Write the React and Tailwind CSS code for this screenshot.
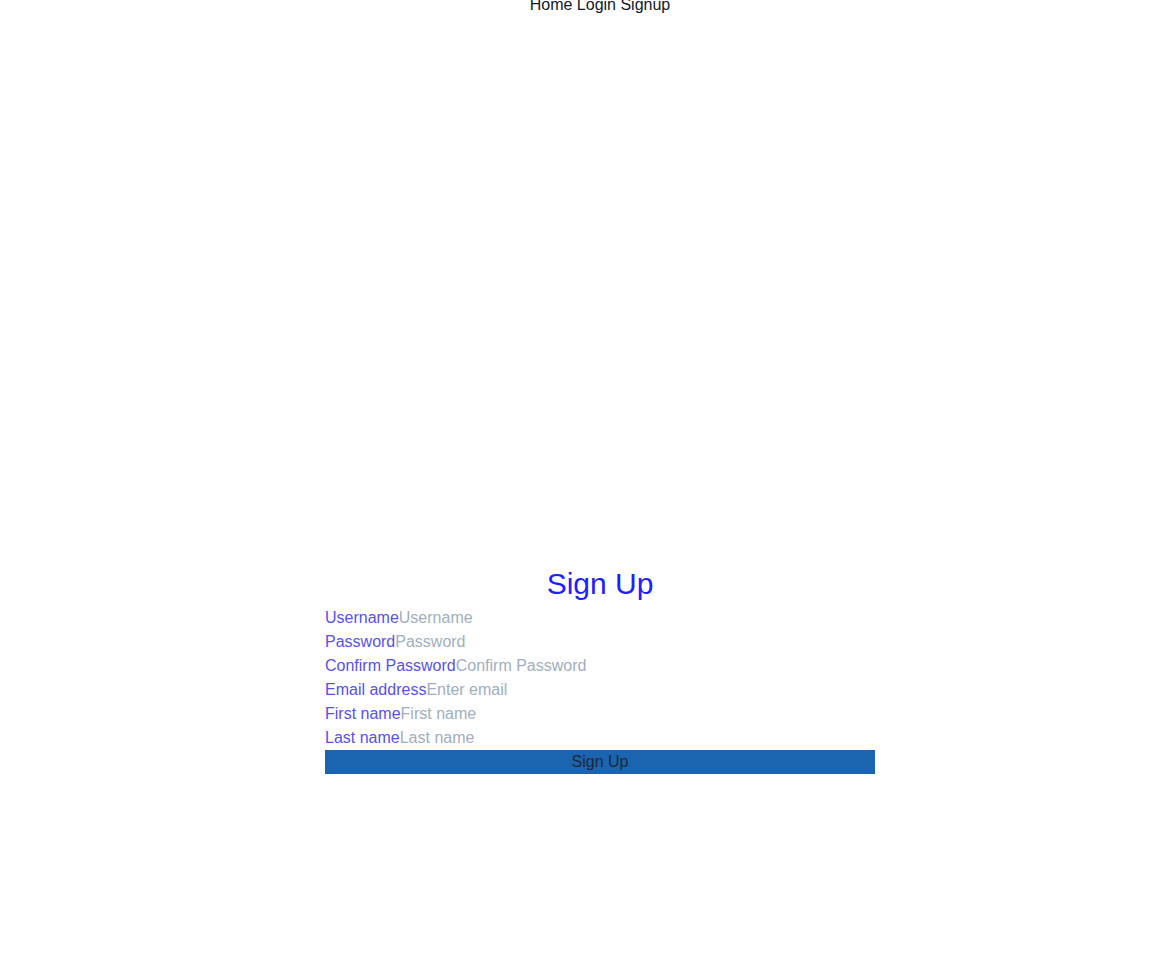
export default function App() {
  const fields = [
    ["Username", "Username", "text"],
    ["Password", "Password", "password"],
    ["Confirm Password", "Confirm Password", "password"],
    ["Email address", "Enter email", "email"],
    ["First name", "First name", "text"],
    ["Last name", "Last name", "text"],
  ];
  return (
    <div
      className="w-[1200px] min-h-[970px] bg-white text-[16px] leading-[24px]"
      style={{ fontFamily: '"Liberation Sans", Arial, sans-serif' }}
    >
      <nav className="text-center text-[#111827] leading-[10px] h-[12px]">
        Home Login Signup
      </nav>
      <div className="pt-[554px] flex justify-center">
        <form className="w-[550px] flex flex-col">
          <h1 className="text-center text-[30px] leading-[36px] text-[#2020ff] mb-[4px]">
            Sign Up
          </h1>
          {fields.map(([label, ph, type]) => (
            <div key={label} className="flex h-[24px] items-center">
              <label className="text-[#5850ec] whitespace-nowrap">{label}</label>
              <input
                type={type}
                placeholder={ph}
                className="bg-transparent outline-none placeholder:text-[#a0aec0] w-[300px] h-[24px]"
              />
            </div>
          ))}
          <button
            type="button"
            className="h-[24px] w-full bg-[#1a64b0] text-[#1f2937] text-center"
          >
            Sign Up
          </button>
        </form>
      </div>
    </div>
  );
}
